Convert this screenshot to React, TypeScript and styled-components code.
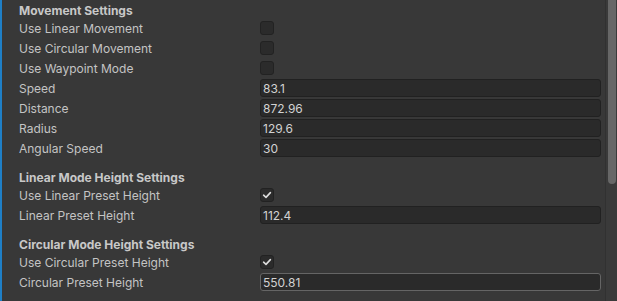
import React from "react";
import styled, { createGlobalStyle } from "styled-components";

const Global = createGlobalStyle`
  html, body { margin: 0; padding: 0; background: #383838; }
  body { width: 617px; height: 301px; overflow: hidden; }
  #root { height: 301px; }
`;

const Window = styled.div`
  display: flex;
  height: 301px;
  background: #383838;
  font-family: Inter, "Noto Sans", sans-serif;
  font-size: 12px;
  color: #c4c4c4;
  overflow: hidden;
`;

const AccentBar = styled.div`
  width: 2px;
  flex: none;
  background: #1f7fc6;
`;

const Content = styled.div`
  flex: 1;
  padding: 0 4px 0 17px;
  display: flex;
  flex-direction: column;
`;

const Section = styled.div<{ $first?: boolean }>`
  display: flex;
  flex-direction: column;
  margin-top: ${(p) => (p.$first ? "0" : "9px")};
`;

const Heading = styled.div`
  height: 18px;
  line-height: 21px;
  font-weight: 700;
  color: #c8c8c8;
  white-space: nowrap;
`;

const Row = styled.div`
  display: flex;
  align-items: center;
  height: 20px;
`;

const Label = styled.div`
  width: 241px;
  flex: none;
  line-height: 20px;
  padding-top: 1px;
  white-space: nowrap;
`;

const Field = styled.div<{ $hover?: boolean }>`
  flex: 1;
  height: 18px;
  box-sizing: border-box;
  border: 1px solid ${(p) => (p.$hover ? "#656565" : "#212121")};
  border-radius: 3px;
  background: #2a2a2a;
  color: #d2d2d2;
  padding: 0 0 0 2px;
  line-height: 17px;
  white-space: nowrap;
`;

const Check = styled.div`
  width: 14px;
  height: 14px;
  box-sizing: border-box;
  border: 1px solid #222;
  border-radius: 3px;
  background: #2b2b2b;
  display: flex;
  align-items: center;
  justify-content: center;
`;

const ScrollTrack = styled.div`
  width: 12px;
  flex: none;
  box-sizing: border-box;
  background: #3a3a3a;
  border-left: 1px solid #313131;
  padding: 0 1px 0 2px;
`;

const Thumb = styled.div`
  height: 184px;
  background: #676767;
  border-radius: 0 0 4px 4px;
`;

type Item =
  | { kind: "check"; label: string; checked: boolean }
  | { kind: "field"; label: string; value: string; hover?: boolean };

const sections: { title: string; items: Item[] }[] = [
  {
    title: "Movement Settings",
    items: [
      { kind: "check", label: "Use Linear Movement", checked: false },
      { kind: "check", label: "Use Circular Movement", checked: false },
      { kind: "check", label: "Use Waypoint Mode", checked: false },
      { kind: "field", label: "Speed", value: "83.1" },
      { kind: "field", label: "Distance", value: "872.96" },
      { kind: "field", label: "Radius", value: "129.6" },
      { kind: "field", label: "Angular Speed", value: "30" },
    ],
  },
  {
    title: "Linear Mode Height Settings",
    items: [
      { kind: "check", label: "Use Linear Preset Height", checked: true },
      { kind: "field", label: "Linear Preset Height", value: "112.4" },
    ],
  },
  {
    title: "Circular Mode Height Settings",
    items: [
      { kind: "check", label: "Use Circular Preset Height", checked: true },
      { kind: "field", label: "Circular Preset Height", value: "550.81", hover: true },
    ],
  },
];

const CheckMark = () => (
  <svg width="10" height="10" viewBox="0 0 10 10">
    <path d="M1.6 5.2 L4 7.4 L8.4 2.6" fill="none" stroke="#dcdcdc" strokeWidth="1.6" strokeLinecap="round" strokeLinejoin="round" />
  </svg>
);

export default function App() {
  return (
    <>
      <Global />
      <Window>
        <AccentBar />
        <Content>
          {sections.map((s, i) => (
            <Section key={s.title} $first={i === 0}>
              <Heading>{s.title}</Heading>
              {s.items.map((it) => (
                <Row key={it.label}>
                  <Label>{it.label}</Label>
                  {it.kind === "check" ? (
                    <Check>{it.checked && <CheckMark />}</Check>
                  ) : (
                    <Field $hover={it.hover}>{it.value}</Field>
                  )}
                </Row>
              ))}
            </Section>
          ))}
        </Content>
        <ScrollTrack>
          <Thumb />
        </ScrollTrack>
      </Window>
    </>
  );
}
